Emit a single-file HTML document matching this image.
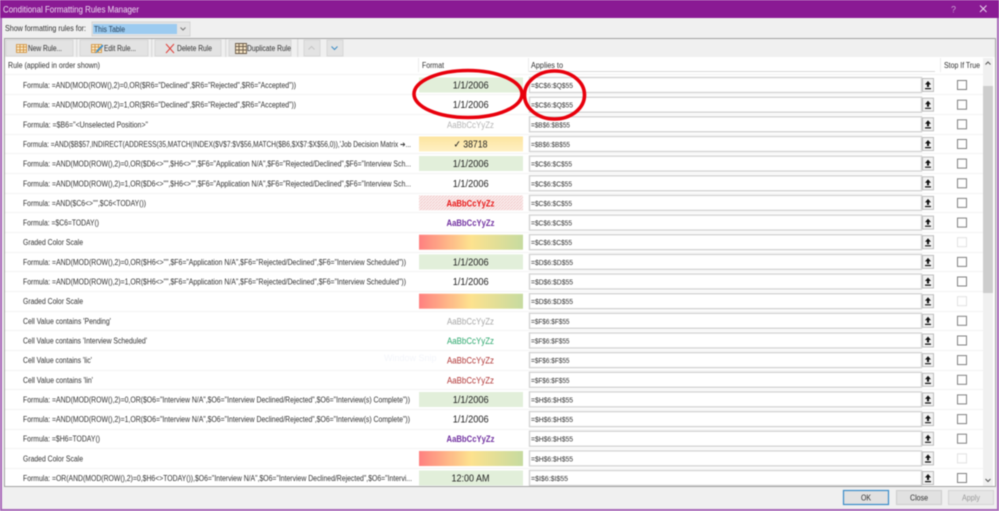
<!DOCTYPE html>
<html><head><meta charset="utf-8"><title>Conditional Formatting Rules Manager</title>
<style>
html,body{margin:0;padding:0;background:#f0f0f0;overflow:hidden}
svg{display:block;filter:blur(.45px)}
text{font-family:"Liberation Sans",sans-serif;font-size:8px;fill:#303030}
.r{font-size:8px;fill:#303030}
.v{font-size:7.6px;fill:#303030}
.f{font-size:9.8px;fill:#222;text-anchor:middle}
.a{font-size:9.6px;text-anchor:middle}
</style></head>
<body>
<svg width="999" height="511" viewBox="0 0 999 511" xmlns="http://www.w3.org/2000/svg">
<defs>
<linearGradient id="cs"><stop offset="0" stop-color="#ff8080"/><stop offset=".5" stop-color="#fde28e"/><stop offset="1" stop-color="#c6dba0"/></linearGradient>
<linearGradient id="yl" x1="0" y1="0" x2="0" y2="1"><stop offset="0" stop-color="#fde59f"/><stop offset="1" stop-color="#fff0c4"/></linearGradient>
<pattern id="ht" width="3" height="3" patternUnits="userSpaceOnUse"><rect width="3" height="3" fill="#fbeeee"/><path d="M0 3L3 0" stroke="#f0c8c8" stroke-width=".8"/></pattern>
<g id="in"><rect x="529.500" y="-7.500" width="392" height="15" fill="#fff" stroke="#d4d4d4" stroke-width="1.400"/><rect x="922.500" y="-6.500" width="11" height="13" fill="#f2f2f2" stroke="#bcbcbc"/><path d="M928 -4L931 -.5H929V2H927V-.5H925ZM925 3H931V4.200H925Z" fill="#111"/></g>
<g id="cb"><rect x="957.500" y="-4.500" width="9" height="9" fill="#fff" stroke="#808080"/></g>
<g id="cd"><rect x="957.500" y="-4.500" width="9" height="9" fill="#fff" stroke="#e2e2e2"/></g>
</defs>

<rect width="999" height="511" fill="#f0f0f0"/>
<rect x="0" y="0" width="2" height="511" fill="#a868b8"/>
<rect x="997" y="0" width="2" height="511" fill="#a868b8"/>
<rect x="0" y="509" width="999" height="2" fill="#a868b8"/>
<rect width="999" height="18" fill="#8a1a94"/>
<text x="3" y="12.500" textLength="136" lengthAdjust="spacingAndGlyphs" style="font-size:9.500px;fill:#ecdcf0">Conditional Formatting Rules Manager</text>
<text x="951" y="12.500" style="font-size:9px;fill:#c9a0d4">?</text>
<path d="M980 5.500L986.500 12M986.500 5.500L980 12" stroke="#e8d4ee" stroke-width="1"/>

<text x="5" y="31" textLength="81" lengthAdjust="spacingAndGlyphs" style="font-size:8.600px">Show formatting rules for:</text>
<rect x="92" y="22" width="98" height="14" fill="#e4e4e4" stroke="#d4d4d4"/>
<rect x="93" y="24" width="84" height="10" fill="#9ccbf0"/>
<text x="94" y="32" textLength="31" lengthAdjust="spacingAndGlyphs" style="font-size:8px;fill:#26425c">This Table</text>
<path d="M180.500 27.500L183 30L185.500 27.500" fill="none" stroke="#777"/>

<rect x="4.500" y="38.500" width="991" height="448" fill="#fff" stroke="#a2a2a2"/>
<rect x="5" y="39" width="990" height="18" fill="#f0f0f0"/>
<rect x="5" y="57" width="978" height="17" fill="#fff"/>

<rect x="6" y="40" width="67" height="16" fill="#e3e3e3" stroke="#d6d6d6"/>
<rect x="80" y="40" width="68" height="16" fill="#e3e3e3" stroke="#d6d6d6"/>
<rect x="155" y="40" width="66" height="16" fill="#e3e3e3" stroke="#d6d6d6"/>
<rect x="229" y="40" width="62" height="16" fill="#e3e3e3" stroke="#d6d6d6"/>
<rect x="304" y="40" width="16" height="16" fill="#e3e3e3" stroke="#d6d6d6"/>
<rect x="327" y="40" width="16" height="16" fill="#e3e3e3" stroke="#d6d6d6"/>
<rect x="76" y="39" width="1.500" height="18" fill="#dedede"/>
<rect x="151" y="39" width="1.500" height="18" fill="#dedede"/>
<rect x="225" y="39" width="1.500" height="18" fill="#dedede"/>
<rect x="297" y="39" width="1.500" height="18" fill="#dedede"/>

<path d="M16.500 44.500H26.500V52.500H16.500ZM16.500 47H26.500M16.500 50H26.500M20 44.500V52.500M23.500 44.500V52.500" fill="#f8e8c8" stroke="#d08a30" stroke-width=".8"/>
<text x="28" y="51" textLength="34" lengthAdjust="spacingAndGlyphs">New Rule...</text>
<path d="M91.500 44.500H101.500V52.500H91.500ZM91.500 47H101.500M91.500 50H101.500M95 44.500V52.500M98.500 44.500V52.500" fill="#f8e8c8" stroke="#d08a30" stroke-width=".8"/>
<path d="M95 53.500L97 50L102.500 44.500L103.500 46L98 51.500Z" fill="#3a8fd0"/>
<text x="104" y="51" textLength="32" lengthAdjust="spacingAndGlyphs">Edit Rule...</text>
<path d="M166 44L174 53M174 44L166 53" stroke="#e0403a" stroke-width="1"/>
<text x="177" y="51" textLength="35" lengthAdjust="spacingAndGlyphs">Delete Rule</text>
<path d="M235.500 43.500H246.500V53.500H235.500ZM235.500 46.500H246.500M235.500 50H246.500M239 43.500V53.500M243 43.500V53.500" fill="#f6e4c4" stroke="#6a5a48" stroke-width=".9"/>
<text x="247" y="51" textLength="44" lengthAdjust="spacingAndGlyphs">Duplicate Rule</text>
<path d="M308.500 49.500L311.500 46.500L314.500 49.500" fill="none" stroke="#c4c4c4"/>
<path d="M331.500 46.500L334.500 49.500L337.500 46.500" fill="none" stroke="#3c8cc4"/>

<text x="8" y="68" textLength="92" lengthAdjust="spacingAndGlyphs">Rule (applied in order shown)</text>
<text x="422" y="68" textLength="22" lengthAdjust="spacingAndGlyphs">Format</text>
<text x="531" y="68" textLength="32" lengthAdjust="spacingAndGlyphs">Applies to</text>
<text x="944" y="68" textLength="36" lengthAdjust="spacingAndGlyphs">Stop If True</text>
<rect x="418" y="58" width="1" height="14" fill="#ececec"/>
<rect x="528" y="58" width="1" height="14" fill="#ececec"/>
<rect x="529" y="71" width="406" height="1" fill="#dadada"/>
<rect x="940" y="58" width="1" height="14" fill="#ececec"/>

<g stroke="#f3f3f3" stroke-width="1">
<path d="M5 74.500H983M5 94.500H983M5 114.500H983M5 134.500H983M5 153.500H983M5 173.500H983M5 193.500H983M5 212.500H983M5 232.500H983M5 252.500H983M5 271.500H983M5 291.500H983M5 311.500H983M5 330.500H983M5 350.500H983M5 370.500H983M5 389.500H983M5 409.500H983M5 429.500H983M5 448.500H983M5 468.500H983"/>
</g>

<rect x="983" y="58" width="10" height="428" fill="#f0f0f0"/>
<rect x="983" y="86" width="10" height="207" fill="#cdcdcd"/>
<path d="M985.500 64.500L988 62L990.500 64.500" fill="none" stroke="#555"/>
<path d="M985.500 479L988 481.500L990.500 479" fill="none" stroke="#555"/>

<!-- format cells -->
<rect x="419" y="77.500" width="104" height="15" fill="#e2efda"/>
<rect x="419" y="136.500" width="104" height="15" fill="url(#yl)"/>
<rect x="419" y="156" width="104" height="15" fill="#e2efda"/>
<rect x="419" y="195.400" width="104" height="15" fill="url(#ht)"/>
<rect x="419" y="234.700" width="104" height="15" fill="url(#cs)"/>
<rect x="419" y="254.400" width="104" height="15" fill="#e2efda"/>
<rect x="419" y="293.700" width="104" height="15" fill="url(#cs)"/>
<rect x="419" y="392" width="104" height="15" fill="#e2efda"/>
<rect x="419" y="451" width="104" height="15" fill="url(#cs)"/>
<rect x="419" y="470.500" width="104" height="15" fill="#e2efda"/>

<text x="384" y="361" style="font-size:9px;fill:#f3f5fa">Window Snip</text>

<!-- rows -->
<g transform="translate(0,85)"><use href="#in"/><use href="#cb"/><text class="r" x="23" y="3" textLength="273" lengthAdjust="spacingAndGlyphs">Formula: =AND(MOD(ROW(),2)=0,OR($R6="Declined",$R6="Rejected",$R6="Accepted"))</text><text class="f" x="470.700" y="3.500" textLength="36" lengthAdjust="spacingAndGlyphs">1/1/2006</text><text class="v" x="531" y="3" textLength="42" lengthAdjust="spacingAndGlyphs">=$C$6:$Q$55</text></g>
<g transform="translate(0,104.700)"><use href="#in"/><use href="#cb"/><text class="r" x="23" y="3" textLength="273" lengthAdjust="spacingAndGlyphs">Formula: =AND(MOD(ROW(),2)=1,OR($R6="Declined",$R6="Rejected",$R6="Accepted"))</text><text class="f" x="470.700" y="3.500" textLength="36" lengthAdjust="spacingAndGlyphs">1/1/2006</text><text class="v" x="531" y="3" textLength="42" lengthAdjust="spacingAndGlyphs">=$C$6:$Q$55</text></g>
<g transform="translate(0,124.300)"><use href="#in"/><use href="#cb"/><text class="r" x="23" y="3" textLength="125" lengthAdjust="spacingAndGlyphs">Formula: =$B6="&lt;Unselected Position&gt;"</text><text class="a" style="fill:#b4b4b4" x="470.500" y="3.500" textLength="47" lengthAdjust="spacingAndGlyphs">AaBbCcYyZz</text><text class="v" x="531" y="3" textLength="39" lengthAdjust="spacingAndGlyphs">=$B$6:$B$55</text></g>
<g transform="translate(0,144)"><use href="#in"/><use href="#cb"/><text class="r" x="23" y="3" textLength="388" lengthAdjust="spacingAndGlyphs">Formula: =AND($B$57,INDIRECT(ADDRESS(35,MATCH(INDEX($V$7:$V$56,MATCH($B6,$X$7:$X$56,0)),'Job Decision Matrix ➔...</text><text class="f" x="470.500" y="3.500" textLength="34" lengthAdjust="spacingAndGlyphs">✓ 38718</text><text class="v" x="531" y="3" textLength="39" lengthAdjust="spacingAndGlyphs">=$B$6:$B$55</text></g>
<g transform="translate(0,163.600)"><use href="#in"/><use href="#cb"/><text class="r" x="23" y="3" textLength="388" lengthAdjust="spacingAndGlyphs">Formula: =AND(MOD(ROW(),2)=0,OR($D6&lt;&gt;"",$H6&lt;&gt;"",$F6="Application N/A",$F6="Rejected/Declined",$F6="Interview Sch...</text><text class="f" x="470.700" y="3.500" textLength="36" lengthAdjust="spacingAndGlyphs">1/1/2006</text><text class="v" x="531" y="3" textLength="41" lengthAdjust="spacingAndGlyphs">=$C$6:$C$55</text></g>
<g transform="translate(0,183.300)"><use href="#in"/><use href="#cb"/><text class="r" x="23" y="3" textLength="388" lengthAdjust="spacingAndGlyphs">Formula: =AND(MOD(ROW(),2)=1,OR($D6&lt;&gt;"",$H6&lt;&gt;"",$F6="Application N/A",$F6="Rejected/Declined",$F6="Interview Sch...</text><text class="f" x="470.700" y="3.500" textLength="36" lengthAdjust="spacingAndGlyphs">1/1/2006</text><text class="v" x="531" y="3" textLength="41" lengthAdjust="spacingAndGlyphs">=$C$6:$C$55</text></g>
<g transform="translate(0,202.900)"><use href="#in"/><use href="#cb"/><text class="r" x="23" y="3" textLength="123" lengthAdjust="spacingAndGlyphs">Formula: =AND($C6&lt;&gt;"",$C6&lt;TODAY())</text><text class="a" style="fill:#e81818;font-weight:bold" x="470.500" y="3.500" textLength="48" lengthAdjust="spacingAndGlyphs">AaBbCcYyZz</text><text class="v" x="531" y="3" textLength="41" lengthAdjust="spacingAndGlyphs">=$C$6:$C$55</text></g>
<g transform="translate(0,222.600)"><use href="#in"/><use href="#cb"/><text class="r" x="23" y="3" textLength="76" lengthAdjust="spacingAndGlyphs">Formula: =$C6=TODAY()</text><text class="a" style="fill:#7030a0;font-weight:bold" x="470.500" y="3.500" textLength="48" lengthAdjust="spacingAndGlyphs">AaBbCcYyZz</text><text class="v" x="531" y="3" textLength="41" lengthAdjust="spacingAndGlyphs">=$C$6:$C$55</text></g>
<g transform="translate(0,242.200)"><use href="#in"/><use href="#cd"/><text class="r" x="23" y="3" textLength="60" lengthAdjust="spacingAndGlyphs">Graded Color Scale</text><text class="v" x="531" y="3" textLength="41" lengthAdjust="spacingAndGlyphs">=$C$6:$C$55</text></g>
<g transform="translate(0,261.900)"><use href="#in"/><use href="#cb"/><text class="r" x="23" y="3" textLength="383" lengthAdjust="spacingAndGlyphs">Formula: =AND(MOD(ROW(),2)=0,OR($H6&lt;&gt;"",$F6="Application N/A",$F6="Rejected/Declined",$F6="Interview Scheduled"))</text><text class="f" x="470.700" y="3.500" textLength="36" lengthAdjust="spacingAndGlyphs">1/1/2006</text><text class="v" x="531" y="3" textLength="42" lengthAdjust="spacingAndGlyphs">=$D$6:$D$55</text></g>
<g transform="translate(0,281.500)"><use href="#in"/><use href="#cb"/><text class="r" x="23" y="3" textLength="383" lengthAdjust="spacingAndGlyphs">Formula: =AND(MOD(ROW(),2)=1,OR($H6&lt;&gt;"",$F6="Application N/A",$F6="Rejected/Declined",$F6="Interview Scheduled"))</text><text class="f" x="470.700" y="3.500" textLength="36" lengthAdjust="spacingAndGlyphs">1/1/2006</text><text class="v" x="531" y="3" textLength="42" lengthAdjust="spacingAndGlyphs">=$D$6:$D$55</text></g>
<g transform="translate(0,301.200)"><use href="#in"/><use href="#cd"/><text class="r" x="23" y="3" textLength="60" lengthAdjust="spacingAndGlyphs">Graded Color Scale</text><text class="v" x="531" y="3" textLength="42" lengthAdjust="spacingAndGlyphs">=$D$6:$D$55</text></g>
<g transform="translate(0,320.800)"><use href="#in"/><use href="#cb"/><text class="r" x="23" y="3" textLength="88" lengthAdjust="spacingAndGlyphs">Cell Value contains 'Pending'</text><text class="a" style="fill:#a6a6a6" x="470.500" y="3.500" textLength="47" lengthAdjust="spacingAndGlyphs">AaBbCcYyZz</text><text class="v" x="531" y="3" textLength="38.500" lengthAdjust="spacingAndGlyphs">=$F$6:$F$55</text></g>
<g transform="translate(0,340.500)"><use href="#in"/><use href="#cb"/><text class="r" x="23" y="3" textLength="124" lengthAdjust="spacingAndGlyphs">Cell Value contains 'Interview Scheduled'</text><text class="a" style="fill:#2aa76c" x="470.500" y="3.500" textLength="47" lengthAdjust="spacingAndGlyphs">AaBbCcYyZz</text><text class="v" x="531" y="3" textLength="38.500" lengthAdjust="spacingAndGlyphs">=$F$6:$F$55</text></g>
<g transform="translate(0,360.100)"><use href="#in"/><use href="#cb"/><text class="r" x="23" y="3" textLength="69" lengthAdjust="spacingAndGlyphs">Cell Value contains 'lic'</text><text class="a" style="fill:#b03434" x="470.500" y="3.500" textLength="47" lengthAdjust="spacingAndGlyphs">AaBbCcYyZz</text><text class="v" x="531" y="3" textLength="38.500" lengthAdjust="spacingAndGlyphs">=$F$6:$F$55</text></g>
<g transform="translate(0,379.800)"><use href="#in"/><use href="#cb"/><text class="r" x="23" y="3" textLength="70" lengthAdjust="spacingAndGlyphs">Cell Value contains 'lin'</text><text class="a" style="fill:#b03434" x="470.500" y="3.500" textLength="47" lengthAdjust="spacingAndGlyphs">AaBbCcYyZz</text><text class="v" x="531" y="3" textLength="38.500" lengthAdjust="spacingAndGlyphs">=$F$6:$F$55</text></g>
<g transform="translate(0,399.400)"><use href="#in"/><use href="#cb"/><text class="r" x="23" y="3" textLength="387" lengthAdjust="spacingAndGlyphs">Formula: =AND(MOD(ROW(),2)=0,OR($O6="Interview N/A",$O6="Interview Declined/Rejected",$O6="Interview(s) Complete"))</text><text class="f" x="470.700" y="3.500" textLength="36" lengthAdjust="spacingAndGlyphs">1/1/2006</text><text class="v" x="531" y="3" textLength="42" lengthAdjust="spacingAndGlyphs">=$H$6:$H$55</text></g>
<g transform="translate(0,419.100)"><use href="#in"/><use href="#cb"/><text class="r" x="23" y="3" textLength="387" lengthAdjust="spacingAndGlyphs">Formula: =AND(MOD(ROW(),2)=1,OR($O6="Interview N/A",$O6="Interview Declined/Rejected",$O6="Interview(s) Complete"))</text><text class="f" x="470.700" y="3.500" textLength="36" lengthAdjust="spacingAndGlyphs">1/1/2006</text><text class="v" x="531" y="3" textLength="42" lengthAdjust="spacingAndGlyphs">=$H$6:$H$55</text></g>
<g transform="translate(0,438.700)"><use href="#in"/><use href="#cb"/><text class="r" x="23" y="3" textLength="77" lengthAdjust="spacingAndGlyphs">Formula: =$H6=TODAY()</text><text class="a" style="fill:#7030a0;font-weight:bold" x="470.500" y="3.500" textLength="48" lengthAdjust="spacingAndGlyphs">AaBbCcYyZz</text><text class="v" x="531" y="3" textLength="42" lengthAdjust="spacingAndGlyphs">=$H$6:$H$55</text></g>
<g transform="translate(0,458.400)"><use href="#in"/><use href="#cd"/><text class="r" x="23" y="3" textLength="60" lengthAdjust="spacingAndGlyphs">Graded Color Scale</text><text class="v" x="531" y="3" textLength="42" lengthAdjust="spacingAndGlyphs">=$H$6:$H$55</text></g>
<g transform="translate(0,478)"><use href="#in"/><use href="#cb"/><text class="r" x="23" y="3" textLength="389" lengthAdjust="spacingAndGlyphs">Formula: =OR(AND(MOD(ROW(),2)=0,$H6&lt;&gt;TODAY()),$O6="Interview N/A",$O6="Interview Declined/Rejected",$O6="Intervi...</text><text class="f" x="470.500" y="3.500" textLength="38" lengthAdjust="spacingAndGlyphs">12:00 AM</text><text class="v" x="531" y="3" textLength="37" lengthAdjust="spacingAndGlyphs">=$I$6:$I$55</text></g>

<rect x="5" y="486" width="990" height="1" fill="#a2a2a2"/>

<!-- bottom buttons -->
<rect x="843.500" y="490.500" width="45" height="14" fill="#e1e1e1" stroke="#3a8cc8" stroke-width="1.200"/>
<text x="861" y="500.500" textLength="10" lengthAdjust="spacingAndGlyphs">OK</text>
<rect x="896.500" y="490.500" width="45" height="14" fill="#e1e1e1" stroke="#cdcdcd"/>
<text x="910" y="500.500" textLength="18" lengthAdjust="spacingAndGlyphs">Close</text>
<rect x="948.500" y="490.500" width="45" height="14" fill="#e6e6e6" stroke="#d4d4d4"/>
<text x="962" y="500.500" textLength="18" lengthAdjust="spacingAndGlyphs" style="fill:#9a9a9a">Apply</text>

<!-- annotations -->
<ellipse cx="468" cy="94" rx="54" ry="23.500" fill="none" stroke="#e8000c" stroke-width="3.600"/>
<ellipse cx="554.500" cy="95" rx="30" ry="24" fill="none" stroke="#e8000c" stroke-width="3.600"/>
</svg>
</body></html>
